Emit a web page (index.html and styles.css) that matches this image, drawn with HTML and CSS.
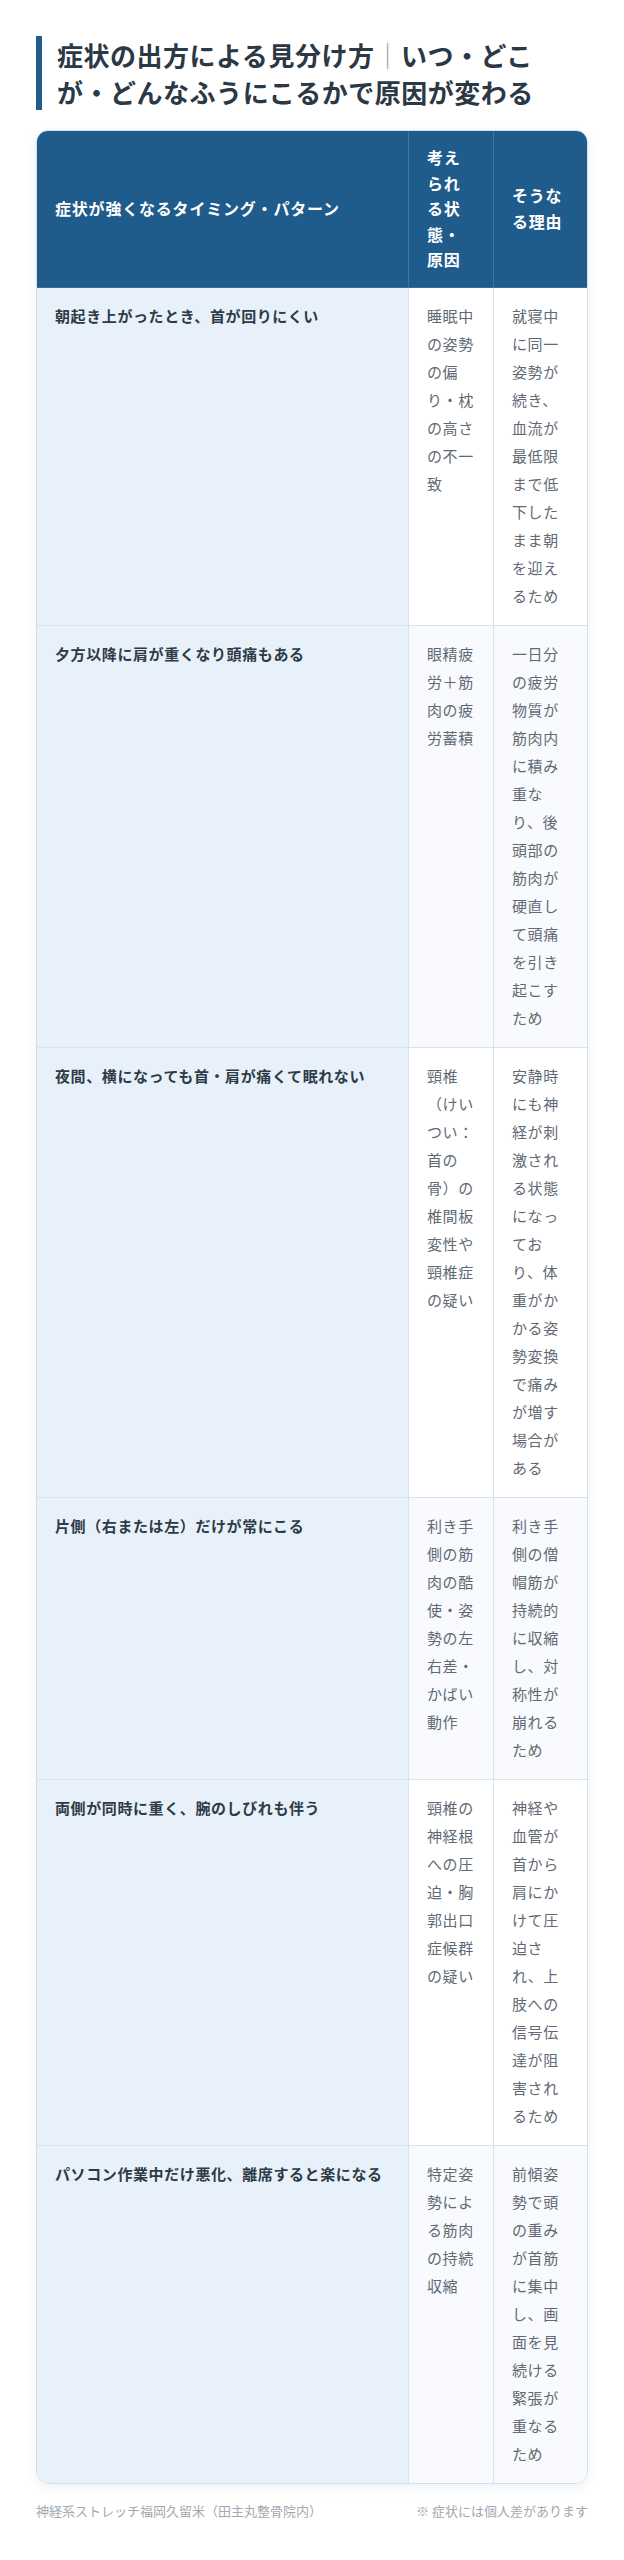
FILE: index.html
```html
<!DOCTYPE html>
<html lang="ja">
<head>
<meta charset="utf-8">
<title>症状の出方による見分け方</title>
<link rel="stylesheet" href="styles.css">
</head>
<body>
<div class="page">
  <h1 class="title">症状の出方による見分け方<span class="sep">｜</span>いつ・どこが・どんなふうにこるかで原因が変わる</h1>
  <div class="card">
    <table class="grid">
      <thead>
        <tr>
          <th class="c1">症状が強くなるタイミング・パターン</th>
          <th class="c2">考えられる状態・原因</th>
          <th class="c3">そうなる理由</th>
        </tr>
      </thead>
      <tbody>
        <tr>
          <td class="c1">朝起き上がったとき、首が回りにくい</td>
          <td class="c2">睡眠中の姿勢の偏り・枕の高さの不一致</td>
          <td class="c3">就寝中に同一姿勢が続き、血流が最低限まで低下したまま朝を迎えるため</td>
        </tr>
        <tr>
          <td class="c1">夕方以降に肩が重くなり頭痛もある</td>
          <td class="c2">眼精疲労＋筋肉の疲労蓄積</td>
          <td class="c3">一日分の疲労物質が筋肉内に積み重なり、後頭部の筋肉が硬直して頭痛を引き起こすため</td>
        </tr>
        <tr>
          <td class="c1">夜間、横になっても首・肩が痛くて眠れない</td>
          <td class="c2">頸椎（けいつい：首の骨）の椎間板変性や頸椎症の疑い</td>
          <td class="c3">安静時にも神経が刺激される状態になっており、体重がかかる姿勢変換で痛みが増す場合がある</td>
        </tr>
        <tr>
          <td class="c1">片側（右または左）だけが常にこる</td>
          <td class="c2">利き手側の筋肉の酷使・姿勢の左右差・かばい動作</td>
          <td class="c3">利き手側の僧帽筋が持続的に収縮し、対称性が崩れるため</td>
        </tr>
        <tr>
          <td class="c1">両側が同時に重く、腕のしびれも伴う</td>
          <td class="c2">頸椎の神経根への圧迫・胸郭出口症候群の疑い</td>
          <td class="c3">神経や血管が首から肩にかけて圧迫され、上肢への信号伝達が阻害されるため</td>
        </tr>
        <tr>
          <td class="c1">パソコン作業中だけ悪化、離席すると楽になる</td>
          <td class="c2">特定姿勢による筋肉の持続収縮</td>
          <td class="c3">前傾姿勢で頭の重みが首筋に集中し、画面を見続ける緊張が重なるため</td>
        </tr>
      </tbody>
    </table>
  </div>
  <div class="foot">
    <span>神経系ストレッチ福岡久留米（田主丸整骨院内）</span>
    <span>※ 症状には個人差があります</span>
  </div>
</div>
</body>
</html>
```

FILE: styles.css
```css
* { box-sizing: border-box; }

html, body {
  margin: 0;
  padding: 0;
  background: #ffffff;
}

body {
  font-family: "Noto Sans CJK JP", "Noto Sans", sans-serif;
  color: #2b3a4a;
}

.page {
  padding: 36px 36px 40px;
}

.title {
  margin: 0;
  font-size: 26px;
  line-height: 37px;
  font-weight: 700;
  letter-spacing: 0.02em;
  color: #2b3845;
  border-left: 6px solid #1f5b8b;
  padding: 0 24px 0 15px;
}

.sep {
  color: #9aa4ae;
  font-weight: 400;
}

.card {
  margin-top: 20px;
  border: 1px solid #d3dfeb;
  border-radius: 12px;
  overflow: hidden;
  box-shadow: 0 4px 12px rgba(30, 70, 110, 0.07);
}

.grid {
  width: 550px;
  table-layout: fixed;
  border-collapse: separate;
  border-spacing: 0;
}

.grid th,
.grid td {
  box-sizing: border-box;
  text-align: left;
}

.grid th {
  background: #1f5b8b;
  color: #ffffff;
  font-size: 16px;
  font-weight: 700;
  line-height: 25.6px;
  letter-spacing: 0.05em;
  padding: 14px 18px;
  vertical-align: middle;
  border-bottom: 1px solid #3a6d99;
}

.grid th.c1,
.grid th.c2 {
  border-right: 1px solid rgba(255, 255, 255, 0.16);
}

.grid th.c1 { width: 372px; }
.grid th.c2 { width: 85px; }
.grid th.c3 { width: 93px; }

.grid td {
  font-size: 15px;
  line-height: 28px;
  letter-spacing: 0.04em;
  padding: 14px 18px 15px;
  vertical-align: top;
  color: #5f6a75;
  background: #ffffff;
  border-bottom: 1px solid #d7e3ef;
}

.grid tbody tr:nth-child(even) td {
  background: #f8fafd;
}

.grid tbody tr:last-child td {
  border-bottom: none;
}

.grid td.c1,
.grid td.c2 {
  border-right: 1px solid #d7e3ef;
}

.grid tbody tr td.c1,
.grid tbody tr:nth-child(even) td.c1 {
  background: #e8f1f9;
  color: #2d3a48;
  font-weight: 700;
}

.foot {
  margin-top: 17px;
  display: flex;
  justify-content: space-between;
  font-size: 13px;
  line-height: 20px;
  color: #a0a9b2;
}
```
